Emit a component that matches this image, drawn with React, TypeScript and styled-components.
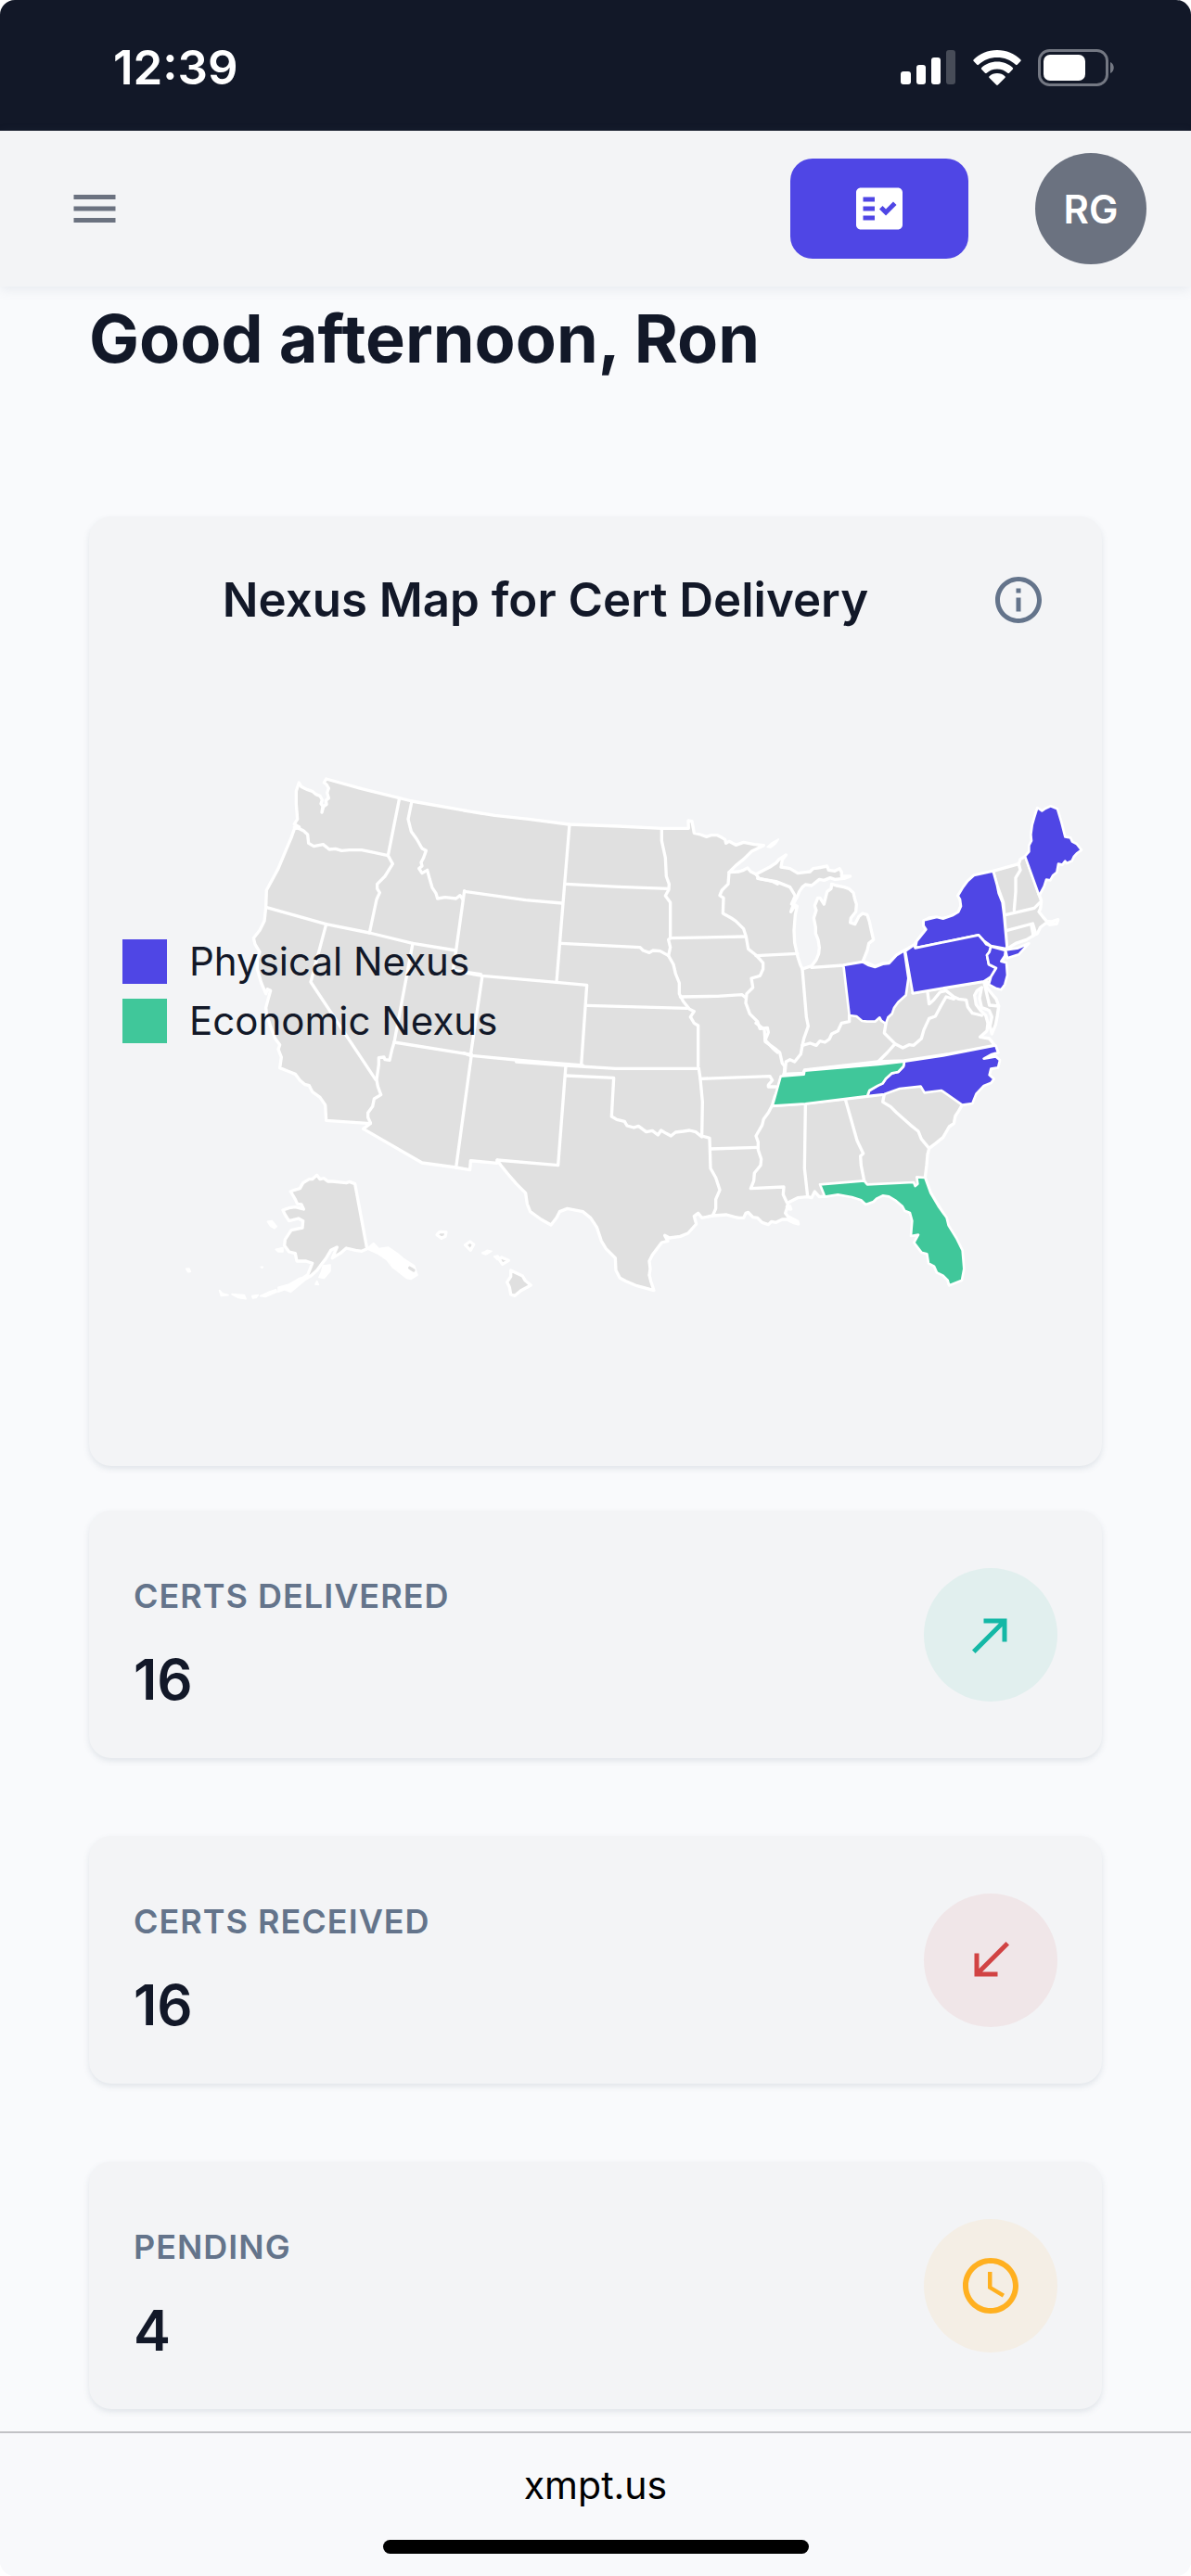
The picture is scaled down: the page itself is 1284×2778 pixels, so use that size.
import React from "react";
import styled, { createGlobalStyle } from "styled-components";
import {
  MdAccessTime,
  MdCallMade,
  MdCallReceived,
  MdFactCheck,
  MdInfoOutline,
  MdMenu,
} from "react-icons/md";

const colors = {
  ink: "#121828",
  page: "#f9fafc",
  panel: "#f3f4f6",
  muted: "#64748b",
  grey: "#6b7280",
  physical: "#4f46e5",
  economic: "#40c79a",
  land: "#e0e0e0",
};

const GlobalStyle = createGlobalStyle`
  *, *::before, *::after { box-sizing: border-box; }
  body {
    margin: 0;
    background: #ffffff;
    color: ${colors.ink};
    font-family: Inter, "Liberation Sans", sans-serif;
  }
  h1, h2, p, dl, dd, dt, ul { margin: 0; padding: 0; }
  button { border: 0; padding: 0; font: inherit; cursor: pointer; }
`;

const Screen = styled.div`
  display: flex;
  flex-direction: column;
  min-height: 100vh;
  background: ${colors.page};
  border-radius: 16px;
  overflow: hidden;
`;

const StatusBar = styled.div`
  display: flex;
  align-items: center;
  justify-content: space-between;
  height: 141px;
  padding: 4px 82px 0 122px;
  background: ${colors.ink};
  color: #ffffff;
`;

const Clock = styled.time`
  font-size: 51px;
  font-weight: 600;
  line-height: 60px;
`;

const StatusIcons = styled.div`
  display: flex;
  align-items: center;
  gap: 18px;
`;

const TopBar = styled.header`
  display: flex;
  align-items: center;
  justify-content: space-between;
  height: 168px;
  padding: 0 48px;
  background: ${colors.panel};
  box-shadow: 0 3px 12px rgba(100, 116, 139, 0.12);
`;

const MenuButton = styled.button`
  display: grid;
  place-items: center;
  width: 108px;
  height: 108px;
  background: none;
  color: ${colors.grey};
`;

const Actions = styled.div`
  display: flex;
  align-items: center;
  gap: 72px;
`;

const PrimaryButton = styled.button`
  display: grid;
  place-items: center;
  width: 192px;
  height: 108px;
  border-radius: 24px;
  background: ${colors.physical};
  color: #ffffff;
`;

const Avatar = styled.button`
  width: 120px;
  height: 120px;
  border-radius: 50%;
  background: ${colors.grey};
  color: #ffffff;
  && {
    font-size: 42px;
    font-weight: 600;
  }
`;

const Main = styled.main`
  display: flex;
  flex-direction: column;
  flex: 1;
  padding: 8px 96px 24px;
`;

const Greeting = styled.h1`
  margin-bottom: 144px;
  font-size: 72px;
  font-weight: 700;
  line-height: 96px;
`;

const Card = styled.section`
  border-radius: 24px;
  background: ${colors.panel};
  box-shadow: 0 3px 6px rgba(100, 116, 139, 0.16);
`;

const MapCard = styled(Card)`
  position: relative;
  margin-bottom: 48px;
`;

const CardHeader = styled.div`
  display: flex;
  align-items: center;
  padding: 36px 36px 0;
`;

const CardTitle = styled.h2`
  flex: 1;
  font-size: 51px;
  font-weight: 600;
  line-height: 72px;
  text-align: center;
`;

const InfoButton = styled(MenuButton)`
  color: ${colors.muted};
`;

const MapDrawing = styled.svg`
  display: block;
  width: 100%;
  stroke: #ffffff;
  stroke-width: 10px;
  stroke-linejoin: round;
  stroke-linecap: round;
  fill: none;
`;

const StatePatch = styled.polygon`
  stroke-width: 8px;
`;

const Islet = styled.polygon`
  fill: #ffffff;
  stroke-width: 5px;
`;

const Legend = styled.ul`
  position: absolute;
  top: 456px;
  left: 36px;
  display: grid;
  gap: 16px;
  list-style: none;
`;

const LegendItem = styled.li<{ $color: string }>`
  display: flex;
  align-items: center;
  gap: 24px;
  font-size: 42px;
  line-height: 48px;
  &::before {
    content: "";
    width: 48px;
    height: 48px;
    background: ${(p) => p.$color};
  }
`;

const Stats = styled.dl`
  display: grid;
  gap: 84px;
`;

const StatCard = styled(Card).attrs({ as: "div" })`
  display: flex;
  align-items: flex-start;
  justify-content: space-between;
  padding: 62px 48px 49px;
`;

const StatLabel = styled.dt`
  margin-bottom: 24px;
  color: ${colors.muted};
  font-size: 36px;
  font-weight: 600;
  line-height: 60px;
  letter-spacing: 1px;
  text-transform: uppercase;
`;

const StatValue = styled.dd`
  font-size: 60px;
  font-weight: 600;
  line-height: 72px;
`;

const StatBadge = styled.div<{ $tint: string; $color: string }>`
  display: grid;
  place-items: center;
  width: 144px;
  height: 144px;
  border-radius: 50%;
  background: ${(p) => p.$tint};
  color: ${(p) => p.$color};
`;

const BrowserBar = styled.footer`
  display: flex;
  flex-direction: column;
  align-items: center;
  justify-content: space-between;
  height: 156px;
  padding: 28px 0 24px;
  border-top: 2px solid #c1c2c5;
  background: #f8f9fb;
`;

const Address = styled.a`
  color: #000000;
  font-size: 41px;
  line-height: 56px;
  text-decoration: none;
`;

const HomeIndicator = styled.div`
  width: 459px;
  max-width: 60%;
  height: 15px;
  border-radius: 8px;
  background: #000000;
`;

/* Moves a list of "x,y" points from its survey sheet into map space. */
const at = (dx: number, dy: number, points: string) =>
  points
    .trim()
    .split(/\s+/)
    .map((pair) => {
      const [x, y] = pair.split(",").map(Number);
      return `${x + dx},${y + dy}`;
    })
    .join(" ");

const nw = (p: string) => at(0, 0, p);
const north = (p: string) => at(930, 0, p);
const ne = (p: string) => at(1890, 60, p);
const sw = (p: string) => at(0, 930, p);
const south = (p: string) => at(990, 900, p);
const se = (p: string) => at(1830, 840, p);

const mainland = [
  nw("397,72 404,85 414,90 425,95 440,100 452,110 465,115 472,128 468,140 474,148 471,168 476,150 486,142 484,130 493,122 488,105 493,90 486,78 478,72 485,60 600,92 722,122 762,132 990,172"),
  north("0,162 100,178 210,190 340,207 500,213 640,220 727,220 726,195 738,197 745,235 765,240 785,247 800,242 820,242 835,250 845,256 848,268 858,262 880,274 905,265 940,272 970,275 930,295 905,320 880,340 858,362 890,360 905,355 918,348 928,360 945,368 990,345"),
  ne("50,272 60,260 82,246 70,262 66,285 95,290 120,305 145,302 160,300 170,290 185,288 215,282 220,295 240,298 255,290 262,302 262,315 290,315 270,322 240,325 225,320 205,328 190,325 165,345 145,342 135,350 125,365 118,382 108,400 98,430 112,408 118,412 112,440 108,490 110,530 120,575 128,600 135,615 165,605 180,585 188,565 190,545 186,520 178,500 178,480 172,450 180,425 175,410 185,385 192,385 205,405 210,385 215,365 228,355 230,340 245,345 270,350 285,355 300,368 305,390 310,405 308,430 292,450 290,465 305,470 318,445 330,435 345,440 352,462 358,490 365,520 350,532 345,555 330,592 345,595 370,607 395,597 415,597 440,570 465,555 497,537 505,525 520,505 535,487 527,475 527,460 545,450 570,447 585,452 605,447 625,440 640,430 648,410 645,390 638,378 650,360 670,330 690,312 752,298 835,275 840,260 857,250 870,235 870,215 878,200 876,180 880,150 887,125 895,97 910,107 922,98 937,92 957,100 970,140 983,190 1000,192 1005,205 1020,212 1035,230 1022,238 1010,250 1005,262 990,270 985,262 975,275 960,270 955,300 943,310 935,325 922,322 915,345 900,372 908,395 905,420 900,430 912,445 925,460 940,462 962,455 958,468 935,472 925,465 905,480 895,500 885,505 860,520 825,532 805,545 800,555 792,570 778,590 793,595 795,635 788,665 778,680 760,675 738,660 728,655 732,675 748,695 762,712 770,735 765,770 760,795 748,825 742,800 748,770 740,750 730,745 715,740 708,710 715,675 700,685 692,700 697,730 712,750 728,765 735,790 732,815 710,835 740,840 757,862"),
  se("820,85 828,105 805,112 785,125 820,118 832,130 826,152 805,158 798,178 812,190 805,200 780,210 755,235 742,268 712,275 700,295 690,310 685,335 670,345 650,380 625,400 605,415 600,435 597,470 592,510 610,560 660,640 665,665 705,735 712,755 715,805 708,840 670,857 665,840 650,825 630,815 622,795 605,785 600,755 582,750 558,720 572,695 548,697 552,650 545,622 528,615 520,600 495,580 475,568 455,565 435,575 425,585 400,595 385,580 355,570 310,562 268,570 250,572 235,555 225,575 212,572 180,575 150,590 145,605 155,603 158,612 145,610 140,625 148,635 180,652 182,660 165,655 145,645 130,645 110,655 95,652 85,662 65,655 50,640 35,638 20,622 12,625 5,640 -10,640"),
  south("815,577 790,570 745,573 710,580 698,565 685,575 692,600 665,630 640,640 605,645 590,637 600,655 580,660 550,700 540,720 543,745 540,765 545,785 555,815 520,805 500,800 465,785 445,775 432,750 430,710 400,680 385,655 370,610 350,580 325,560 275,550 250,560 240,580 222,603 190,585 155,560 145,535 140,500 110,470 80,435 60,410 48,393 48,403 -38,395 -40,425"),
  sw("905,387 795,372 605,262 628,245 485,235 482,185 465,160 440,142 430,122 415,118 400,105 385,85 360,75 335,65 340,30 330,5"),
  nw("335,920 320,900 305,860 292,820 290,800 298,770 305,745 295,740 290,755 275,720 262,675 262,645 270,620 255,595 250,575 270,550 285,520 290,475 292,420 330,350 355,290 372,250 382,222 398,216 382,206 392,190 388,140 388,100"),
].join(" ");

const borders = [
  // Pacific and mountain states
  nw("382,216 400,222 412,228 425,240 428,268 445,278 475,272 495,288 515,286 535,292 560,290 600,290 640,298 685,308"),
  nw("722,122 685,308 700,335 675,375 650,400 650,415 658,428 648,450 625,558"),
  nw("290,475 485,530 625,558 765,592 905,615"),
  nw("762,132 750,190 760,230 778,255 795,285 808,292 800,315 792,330 795,342 785,350 795,365 812,355 820,385 828,412 840,430 845,447 870,443 905,447 918,437 927,450"),
  nw("932,422 905,615 895,680 985,692"),
  nw("485,530 435,717 645,1033"),
  nw("765,592 705,912 698,935 690,970 675,968 672,960 655,962 655,985 648,1033 652,1055 662,1082 640,1095 635,1120 620,1140 620,1155 628,1172"),
  nw("705,912 955,952"),
  sw("955,22 905,387"),
  north("2,424 200,452 318,462"),
  north("342,207 300,718"),
  north("-35,680 60,697 300,718 398,727 380,985"),
  north("60,697 22,955"),
  north("0,947 22,955 200,972 385,987"),
  south("110,75 270,87 430,97 700,97"),
  // Plains
  north("330,400 500,409 660,415"),
  north("315,592 570,605 580,615 600,622 612,615 635,617 662,632"),
  north("640,220 640,260 652,315 655,375 664,400 663,418 652,438 668,460 668,575 662,580 668,605 662,632 678,660 685,690 697,720 697,755 710,780 730,805 745,812 733,830 745,850 758,858 758,990"),
  north("668,575 910,570"),
  north("398,793 722,802"),
  north("700,765 820,763 900,758 912,768"),
  south("700,97 705,130 712,205 710,315 735,322 738,420 755,450 768,490 755,520 755,550 745,573"),
  south("270,120 425,127 418,252 435,262 460,268 468,282 490,288 505,283 530,302 550,298 568,312 578,297 595,307 610,315 625,303 650,300 670,297 690,302 710,318"),
  south("48,393 245,410 270,87"),
  south("705,130 930,122 938,135 925,150 925,156 950,156"),
  south("738,357 890,352"),
  // Mississippi river
  north("858,362 855,400 835,420 828,437 840,445 838,495 865,510 880,520 905,545 913,570 920,610 945,630 968,655 968,675 958,697 930,705 935,735 915,755 912,785 925,820 950,845 958,868 982,865 985,880 975,905 1000,932 1015,945"),
  se("45,10 72,30 75,70 110,95 122,105 130,140 138,150 136,175 125,210 105,250 98,275 85,300 70,320 65,340 45,375 52,395 52,420 62,450 60,470 40,495 38,520 28,545 135,540 133,565 145,590"),
  north("945,368 955,382 1000,392 1015,400"),
  ne("-10,322 50,332 95,350 112,378 100,405"),
  north("945,632 1080,625"),
  // Great Lakes and Ohio valley
  ne("135,615 148,770 154,800 140,840 135,862 130,890 110,915 95,908 82,915 78,955"),
  ne("165,610 268,603 330,592"),
  ne("135,862 160,855 180,862 192,848 208,852 222,842 230,825 250,815 262,790 287,785 287,765"),
  ne("405,792 400,822 435,857 460,870 480,860 495,862 520,840 528,812 545,775 565,768 580,740 600,705 625,712"),
  ne("435,857 410,885 380,915"),
  ne("75,955 138,952 142,942 380,915 465,912 610,890 757,862"),
  ne("492,693 722,655 740,732 770,735"),
  ne("540,690 545,728 560,715 580,690 600,685 625,705 640,712 665,715 670,738 685,758 715,765"),
  // South
  se("98,278 205,270 405,247 460,240"),
  se("460,240 455,265 480,280 500,300 545,340 570,360 580,385 605,415"),
  se("335,260 372,390 392,432 383,440 385,470 395,520"),
  se("205,275 202,480 212,570"),
  // New England
  ne("752,298 765,345 785,400 797,550"),
  ne("835,275 840,295 825,320 825,365 820,425"),
  ne("792,440 885,418 903,400"),
  ne("857,250 900,372"),
  ne("797,490 880,468 890,500"),
  ne("875,470 882,507"),
];

const physicalStates = [
  // Ohio
  ne("268,603 330,592 350,603 370,609 395,599 415,597 440,570 465,555 478,645 470,700 445,722 432,740 425,760 412,772 405,792 390,782 385,772 370,785 345,785 328,783 310,768 287,765"),
  // New York
  ne("500,547 505,525 535,487 527,475 527,457 570,447 590,452 620,442 640,430 648,412 645,390 638,378 655,350 670,330 690,312 752,298 765,345 770,370 782,400 787,440 797,550 745,540 720,522 705,505"),
  // Long Island
  ne("792,553 830,548 868,532 835,568 798,580"),
  // Pennsylvania
  ne("468,557 497,537 500,547 705,505 720,522 730,535 745,542 740,560 732,570 738,600 762,612 745,640 722,655 492,693"),
  // New Jersey
  ne("745,542 792,555 790,572 778,590 795,595 798,635 790,665 778,682 760,677 738,665 745,640 762,612 738,600 732,570 740,560"),
  // Maine
  ne("855,250 868,235 868,215 876,200 874,180 878,150 885,125 895,93 910,103 922,95 938,88 960,97 973,140 985,187 1002,190 1008,203 1022,210 1038,230 1024,240 1013,252 1007,265 990,273 985,266 976,278 963,275 958,302 945,313 937,328 924,326 917,348 901,378"),
  // North Carolina
  se("525,134 650,115 820,82 828,105 805,112 782,125 820,118 834,130 828,154 805,158 800,178 815,191 806,203 782,213 758,238 745,270 712,275 645,228 590,235 578,215 510,222 460,240 405,246 412,228 440,212 455,205 465,190 485,172 505,168 522,150"),
];

const economicStates = [
  // Tennessee
  se("125,182 200,176 202,164 440,144 525,134 522,150 505,168 485,172 465,190 455,205 440,212 412,228 405,246 205,271 98,278 106,250"),
  // Florida
  se("252,532 395,520 405,532 555,525 560,537 568,530 565,508 592,510 610,560 635,602 662,640 668,665 693,705 713,745 718,805 711,842 670,859 665,842 650,827 630,817 621,797 603,787 598,757 580,752 556,720 570,695 546,699 550,650 543,624 526,617 518,602 495,583 475,571 455,568 435,578 425,588 400,597 385,583 355,573 310,565 268,572"),
];

const alaska = sw("455,412 465,425 478,422 490,432 505,432 550,437 560,433 578,440 617,650 600,658 580,655 550,648 530,665 505,680 520,645 500,655 485,680 470,700 455,720 435,738 405,755 380,765 425,735 435,710 440,697 420,690 390,690 385,665 365,660 350,640 352,620 372,590 408,582 410,560 395,552 365,560 352,540 345,525 365,518 385,515 412,522 405,507 392,505 385,490 370,465 382,460 400,455 410,437 430,425 440,425");

const islets = [
  sw("617,650 638,632 655,650 685,645 715,665 735,682 770,705 780,735 760,748 745,745 700,710 680,685 650,665"),
  sw("475,705 498,702 498,722 478,745 462,742 470,725"),
  sw("430,740 400,765 370,790 350,782 330,790 330,775 365,765 400,745"),
  sw("322,782 325,790 290,805 272,803 300,790"),
  sw("180,797 220,800 225,812 200,808"),
  sw("140,785 150,795 168,800 145,802"),
  sw("245,803 265,800 258,808 248,810"),
  sw("295,562 310,560 325,578 318,584 305,577"),
  sw("322,652 345,647 345,660 330,660"),
  sw("32,715 42,714 46,724 38,725"),
  sw("274,709 280,709 278,712"),
  sw("450,765 455,755 460,766"),
  sw("990,665 1005,655 1020,658 1002,668"),
  south("0,692 25,690 10,698"),
  south("38,705 50,702 60,715 48,715"),
  // Isle Royale
  ne("22,220 35,208 58,195 48,210 32,222"),
  ne("-5,218 5,213 8,218"),
];

const islands = [
  sw("843,605 852,595 873,596 870,610 858,616"),
  sw("935,638 950,627 962,636 952,655"),
  south("55,715 62,708 85,718 65,730"),
  south("92,750 130,768 138,782 157,798 125,815 105,832 92,828 88,805 80,788 92,770"),
];

function NexusMap() {
  return (
    <MapDrawing viewBox="-282 -357 3276 2640" role="img" aria-label="Map of the United States by nexus type">
      <polygon points={mainland} fill={colors.land} />
      <polygon points={alaska} fill={colors.land} />
      {islets.map((p) => (
        <Islet key={p} points={p} />
      ))}
      {islands.map((p) => (
        <polygon key={p} points={p} fill={colors.land} />
      ))}
      <polyline points={sw("755,712 768,720")} stroke={colors.land} />
      {borders.map((p) => (
        <polyline key={p} points={p} />
      ))}
      {physicalStates.map((p) => (
        <StatePatch key={p} points={p} fill={colors.physical} />
      ))}
      {economicStates.map((p) => (
        <StatePatch key={p} points={p} fill={colors.economic} />
      ))}
    </MapDrawing>
  );
}

function SignalIcon() {
  return (
    <svg width="60" height="38" viewBox="0 0 60 38" fill="#ffffff" aria-hidden="true">
      <rect x="0" y="23" width="11" height="14" rx="3" />
      <rect x="17" y="16" width="10" height="21" rx="3" />
      <rect x="33" y="8" width="10" height="29" rx="3" />
      <rect x="49" y="0" width="10" height="37" rx="3" fill="#474c58" />
    </svg>
  );
}

function WifiIcon() {
  return (
    <svg width="52" height="38" viewBox="0 0 52 38" fill="#ffffff" aria-hidden="true">
      <path d="M26 0C36 0 45 4 51.300 10.300q.8.900 0 1.800l-3.600 3.700q-.8.800-1.700 0C40.500 10.600 33.600 8 26 8S11.500 10.600 6 15.800q-.9.800-1.700 0L.7 12.100q-.8-.9 0-1.800C7 4 16 0 26 0Z" />
      <path d="M26 12.500c6.700 0 12.500 2.400 16.800 6.500q.9.900 0 1.800l-3.800 3.900q-.8.800-1.700 0C34.200 22 30.400 20.500 26 20.500S17.800 22 14.700 24.700q-.9.800-1.700 0l-3.800-3.900q-.9-.9 0-1.800C13.500 14.900 19.300 12.500 26 12.500Z" />
      <path d="M26 25c3.300 0 6.200 1.200 8.400 3.200q.9.900 0 1.800l-7.500 7.500q-.9.800-1.800 0L17.600 30q-.9-.9 0-1.800C19.800 26.200 22.700 25 26 25Z" />
    </svg>
  );
}

function BatteryIcon() {
  return (
    <svg width="83" height="40" viewBox="0 0 83 40" aria-hidden="true">
      <rect x="1.500" y="1.500" width="73" height="37" rx="11" fill="none" stroke="#747883" strokeWidth="3" />
      <rect x="6" y="6" width="45" height="28" rx="7" fill="#ffffff" />
      <path d="M78 14c5 2 5 10 0 12Z" fill="#747883" />
    </svg>
  );
}

const stats = [
  { label: "Certs delivered", value: 16, tint: "#e1efee", color: "#14b8a6", Icon: MdCallMade, size: 60 },
  { label: "Certs received", value: 16, tint: "#f0e6e8", color: "#d14343", Icon: MdCallReceived, size: 60 },
  { label: "Pending", value: 4, tint: "#f4eee5", color: "#ffb020", Icon: MdAccessTime, size: 72 },
];

export default function App() {
  return (
    <Screen>
      <GlobalStyle />
      <StatusBar>
        <Clock>12:39</Clock>
        <StatusIcons>
          <SignalIcon />
          <WifiIcon />
          <BatteryIcon />
        </StatusIcons>
      </StatusBar>
      <TopBar>
        <MenuButton type="button" aria-label="Open menu">
          <MdMenu size={60} />
        </MenuButton>
        <Actions>
          <PrimaryButton type="button" aria-label="Certificates">
            <MdFactCheck size={60} />
          </PrimaryButton>
          <Avatar type="button">RG</Avatar>
        </Actions>
      </TopBar>
      <Main>
        <Greeting>Good afternoon, Ron</Greeting>
        <MapCard>
          <CardHeader>
            <CardTitle>Nexus Map for Cert Delivery</CardTitle>
            <InfoButton type="button" aria-label="About this map">
              <MdInfoOutline size={60} />
            </InfoButton>
          </CardHeader>
          <NexusMap />
          <Legend>
            <LegendItem $color={colors.physical}>Physical Nexus</LegendItem>
            <LegendItem $color={colors.economic}>Economic Nexus</LegendItem>
          </Legend>
        </MapCard>
        <Stats>
          {stats.map(({ label, value, tint, color, Icon, size }) => (
            <StatCard key={label}>
              <div>
                <StatLabel>{label}</StatLabel>
                <StatValue>{value}</StatValue>
              </div>
              <StatBadge $tint={tint} $color={color}>
                <Icon size={size} />
              </StatBadge>
            </StatCard>
          ))}
        </Stats>
      </Main>
      <BrowserBar>
        <Address href="#">xmpt.us</Address>
        <HomeIndicator />
      </BrowserBar>
    </Screen>
  );
}
